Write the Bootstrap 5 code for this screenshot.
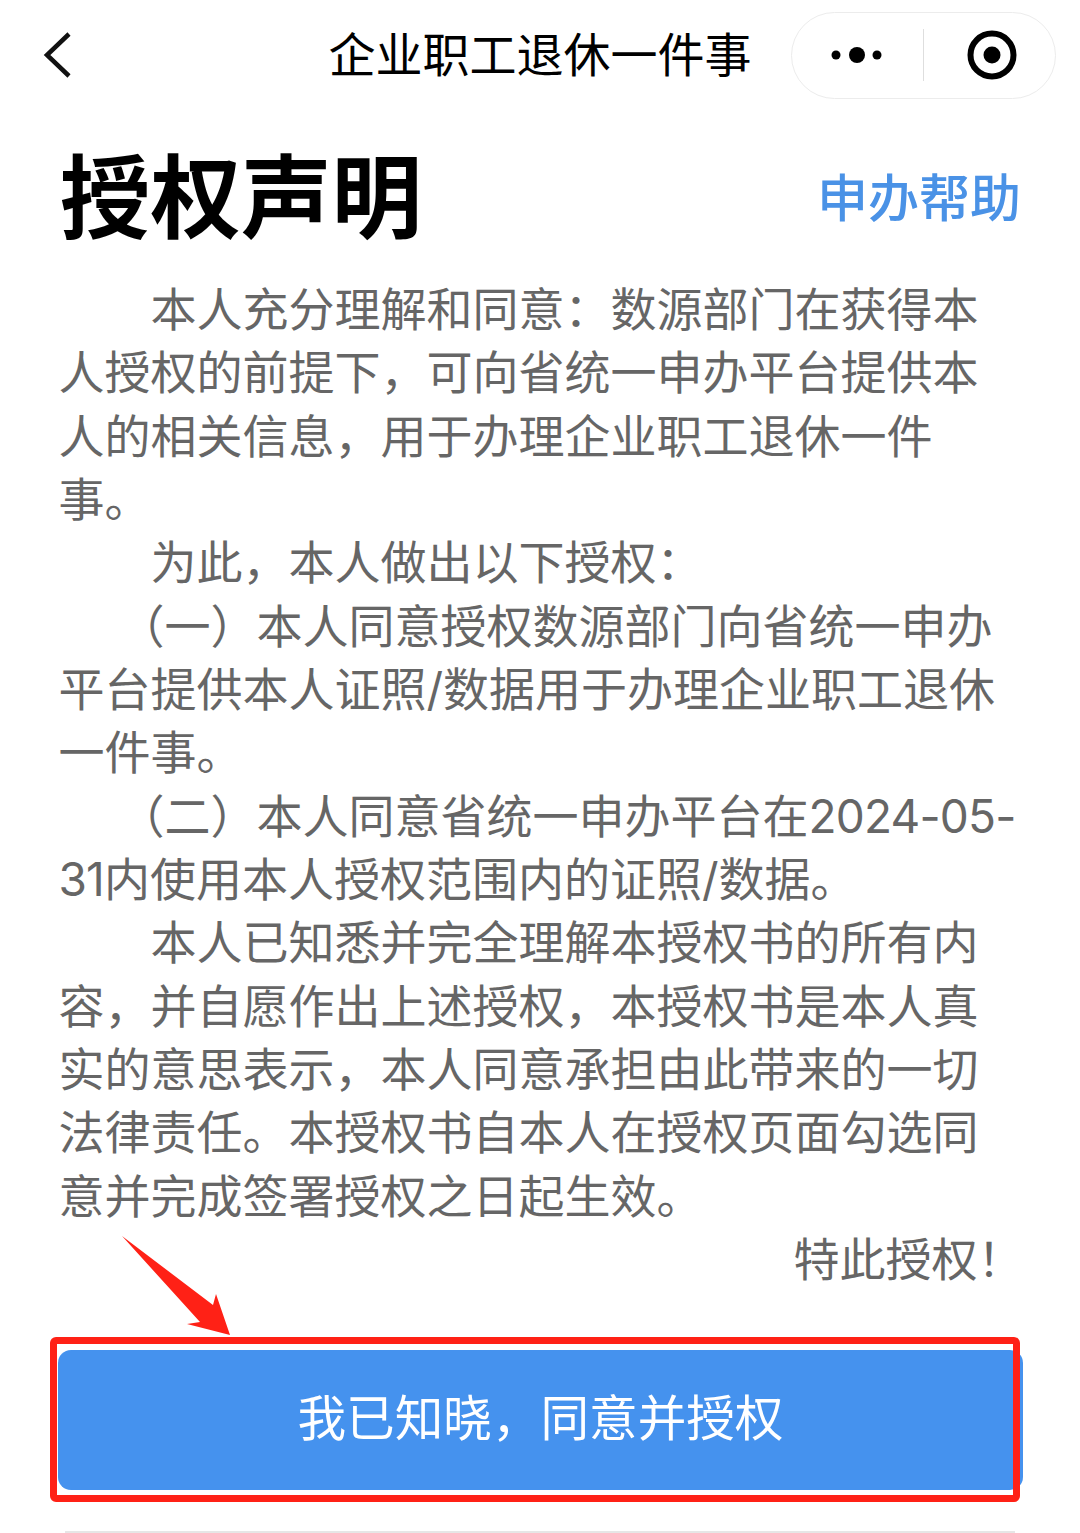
<!DOCTYPE html>
<html lang="zh-CN">
<head>
<meta charset="utf-8">
<title>授权声明</title>
<link href="https://cdn.jsdelivr.net/npm/bootstrap@5.3.0/dist/css/bootstrap.min.css" rel="stylesheet">
<style>
html,body{height:1533px;overflow:hidden;background:#fff}
body{position:relative;font-family:"Noto Sans CJK SC","Liberation Sans",sans-serif}
.wx-bar{display:grid;grid-template-columns:1fr auto 1fr;align-items:center;height:110px;padding:0 24px}
.wx-back{margin-left:19px}
.wx-title{font-size:47px;line-height:1;color:#000;margin:0 0 8px;font-weight:400}
.wx-capsule{width:265px;height:87px;border:1px solid #ececec;border-radius:44px;background:#fff;justify-self:end}
.wx-sep{width:1px;height:52px;background:#dedede}
.wx-cell{width:132px}
.wx-target{margin-left:4px}
.head-row{height:168px;padding:0 59px 3px 60px}
.head-main{font-size:90.5px;line-height:1;font-weight:700;color:#000;margin:0}
.head-help{font-size:51px;line-height:1;color:#4a92e6;text-decoration:none;font-weight:500;margin-top:6px}
.decl{padding:0 56.5px 0 58.5px;font-family:Inter,"Noto Sans CJK SC",sans-serif;font-size:46px;line-height:63.35px;color:#666}
.decl p{margin:0}
.ind-a{text-indent:92px}
.ind-b{text-indent:60px}
.nums{letter-spacing:-.8px}
.agree-wrap{padding:58px 57px 0 58px}
.agree-btn{display:block;width:100%;height:140px;background:#4592ee;border:0;border-radius:13px;color:#fff;font-size:48.6px;line-height:1;padding:0 0 8px}
.foot-line{position:absolute;left:65px;right:65px;bottom:0;height:2px;margin:0;background:#e6e6e6;border:0;opacity:1}
.mark-box{position:absolute;left:50px;top:1337px;width:970px;height:165px;border:7px solid #ff2116;border-radius:6px}
.mark-arrow{position:absolute;left:120px;top:1234px}
</style>
</head>
<body>
<header class="wx-bar">
  <svg width="30" height="48" viewBox="0 0 30 48" class="d-block wx-back"><path d="M26 3 L4 24 L26 45" fill="none" stroke="#111" stroke-width="4.5"/></svg>
  <h1 class="wx-title">企业职工退休一件事</h1>
  <div class="wx-capsule d-flex align-items-center">
    <div class="wx-cell d-flex justify-content-center">
      <svg width="56" height="20" viewBox="0 0 56 20" class="d-block"><circle cx="6" cy="10" r="4.5"/><circle cx="27" cy="10" r="8"/><circle cx="47" cy="10" r="4.5"/></svg>
    </div>
    <div class="wx-sep"></div>
    <div class="wx-cell d-flex justify-content-center">
      <svg width="50" height="50" viewBox="0 0 50 50" class="d-block wx-target"><circle cx="25" cy="25" r="21.5" fill="none" stroke="#000" stroke-width="6"/><circle cx="25" cy="25" r="8.5"/></svg>
    </div>
  </div>
</header>
<div class="head-row d-flex justify-content-between align-items-center">
  <h2 class="head-main">授权声明</h2>
  <a class="head-help" href="#">申办帮助</a>
</div>
<div class="decl">
  <p class="ind-a">本人充分理解和同意：数源部门在获得本人授权的前提下，可向省统一申办平台提供本人的相关信息，用于办理企业职工退休一件事。</p>
  <p class="ind-a">为此，本人做出以下授权：</p>
  <p class="ind-b">（一）本人同意授权数源部门向省统一申办平台提供本人证照/数据用于办理企业职工退休一件事。</p>
  <p class="ind-b">（二）本人同意省统一申办平台在<span class="nums">2024-05-</span><span class="nums">31</span>内使用本人授权范围内的证照/数据。</p>
  <p class="ind-a">本人已知悉并完全理解本授权书的所有内容，并自愿作出上述授权，本授权书是本人真实的意思表示，本人同意承担由此带来的一切法律责任。本授权书自本人在授权页面勾选同意并完成签署授权之日起生效。</p>
  <p class="text-end">特此授权！</p>
</div>
<div class="agree-wrap">
  <button type="button" class="btn agree-btn">我已知晓，同意并授权</button>
</div>
<hr class="foot-line">
<div class="mark-box"></div>
<svg class="mark-arrow" width="114" height="104" viewBox="0 0 114 104"><path d="M2 2 L93 71 L96 60 L110 101 L67 90 L80 88 Z" fill="#ff2116"/></svg>
<script src="https://cdn.jsdelivr.net/npm/bootstrap@5.3.0/dist/js/bootstrap.bundle.min.js"></script>
</body>
</html>
